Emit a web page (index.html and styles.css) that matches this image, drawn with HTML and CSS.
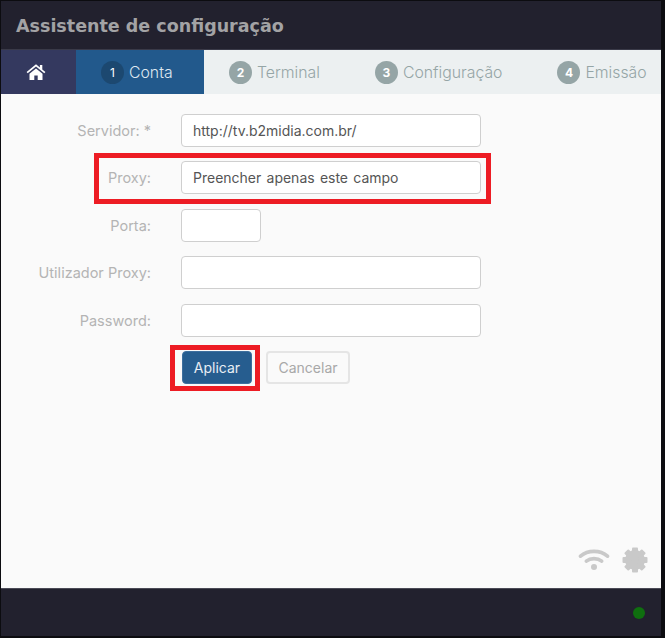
FILE: index.html
```html
<!DOCTYPE html>
<html lang="pt">
<head>
<meta charset="utf-8">
<title>Assistente de configuração</title>
<link rel="stylesheet" href="styles.css">
</head>
<body>
<div class="window">
  <header class="title-bar"><h1>Assistente de configuração</h1></header>
  <nav class="tabs">
    <div class="tab-home">
      <svg width="20" height="18" viewBox="0 0 20 18"><path fill="#fff" d="M10 1.2 0.6 9l1.1 1.3L10 3.5l8.3 6.8L19.400 9 16.300 6.500V2h-2.400v2.500zM3.500 10.800V17h4.800v-4.600h3.400V17h4.800v-6.200L10 5.400z"/></svg>
    </div>
    <div class="tab active"><span class="num">1</span><span>Conta</span></div>
    <div class="tab"><span class="num">2</span><span>Terminal</span></div>
    <div class="tab"><span class="num">3</span><span>Configuração</span></div>
    <div class="tab"><span class="num">4</span><span>Emissão</span></div>
  </nav>
  <main class="content">
    <form class="form">
      <div class="row"><label>Servidor: *</label><div class="input wide val">http://tv.b2midia.com.br/</div></div>
      <div class="row"><label>Proxy:</label><div class="input wide val spaced">Preencher apenas este campo</div></div>
      <div class="row"><label>Porta:</label><div class="input short"></div></div>
      <div class="row"><label>Utilizador Proxy:</label><div class="input wide"></div></div>
      <div class="row"><label>Password:</label><div class="input wide"></div></div>
      <div class="actions">
        <button type="button" class="btn primary">Aplicar</button>
        <button type="button" class="btn">Cancelar</button>
      </div>
      <div class="mark mark-proxy"></div>
      <div class="mark mark-apply"></div>
    </form>
    <div class="status-icons">
      <svg class="wifi" width="32" height="24" viewBox="0 0 32 24" fill="none" stroke="#c9c9c9" stroke-width="3.600" stroke-linecap="round">
        <path d="M2.500 9.200C9.800 2.800 22.200 2.800 29.500 9.200"/>
        <path d="M8.300 14.200C12.500 10.800 19.500 10.800 23.700 14.200"/>
        <circle cx="16" cy="20" r="3" fill="#c9c9c9" stroke="none"/>
      </svg>
      <svg width="26" height="26" viewBox="0 0 26 26">
        <g fill="#c9c9c9">
          <rect x="10" y="0.500" width="6" height="25" rx="1"/>
          <rect x="10" y="0.500" width="6" height="25" rx="1" transform="rotate(45 13 13)"/>
          <rect x="10" y="0.500" width="6" height="25" rx="1" transform="rotate(90 13 13)"/>
          <rect x="10" y="0.500" width="6" height="25" rx="1" transform="rotate(135 13 13)"/>
        </g>
        <circle cx="13" cy="13" r="7" fill="none" stroke="#c9c9c9" stroke-width="6"/>
      </svg>
    </div>
  </main>
  <footer class="foot"><span class="led"></span></footer>
</div>
</body>
</html>
```
FILE: styles.css
```css
* { box-sizing: border-box; }
html, body { height: 100%; }
body {
  margin: 0;
  background: #0c0c10;
  font-family: Inter, sans-serif;
  overflow: hidden;
}
.window {
  width: 660px;
  height: 635px;
  margin: 1px 0 0 1px;
  display: flex;
  flex-direction: column;
  background: #22212e;
}
.title-bar {
  height: 48px;
  flex: none;
  display: flex;
  align-items: center;
  padding: 2px 0 0 15px;
  background: #22212e;
}
.title-bar h1 {
  margin: 0;
  font-family: "DejaVu Sans", sans-serif;
  font-size: 17.500px;
  font-weight: 700;
  color: #a3a3a5;
}
.tabs {
  height: 45px;
  flex: none;
  display: flex;
  overflow: hidden;
  background: #ecf0f1;
  border-top: 1px solid #3a3a48;
}
.tab-home {
  width: 75px;
  flex: none;
  display: flex;
  align-items: center;
  justify-content: center;
  padding-right: 5px;
  background: #34395f;
}
.tab {
  flex: none;
  display: flex;
  align-items: center;
  gap: 5px;
  padding: 0 30px 0 25px;
  font-weight: 300;
  font-size: 15.800px;
  color: #95a5a6;
}
.tab.active { width: 128px; background: #22598c; color: #dfe8f0; }
.num {
  width: 23px;
  height: 23px;
  border-radius: 50%;
  display: flex;
  align-items: center;
  justify-content: center;
  background: #95a5a6;
  color: #fff;
  font-size: 12px;
  font-weight: 700;
}
.tab.active .num { background: #1c4870; font-weight: 400; }
.content {
  flex: 1;
  position: relative;
  background: #fafafa;
  padding-top: 20px;
}
.form {
  position: relative;
  width: 490px;
}
.row {
  display: flex;
  align-items: center;
  height: 33px;
  margin-bottom: 14.400px;
}
.row label {
  width: 150px;
  margin-right: 30px;
  text-align: right;
  font-size: 14.500px;
  color: #b4b4b4;
  white-space: nowrap;
}
.input {
  height: 33px;
  border: 1px solid #cfcfcf;
  border-radius: 4px;
  background: #fff;
  display: flex;
  align-items: center;
  padding: 0 11px;
  font-size: 14px;
  color: #555;
}
.spaced { word-spacing: 1.300px; }
.wide { width: 300px; }
.short { width: 80px; }
.actions {
  display: flex;
  gap: 14px;
  padding-left: 181px;
}
.btn {
  width: 84px;
  height: 33px;
  padding: 0;
  border: 2px solid #e5e5e5;
  border-radius: 4px;
  background: #fafafa;
  color: #a8a8a8;
  font: 14px Inter, sans-serif;
}
.btn.primary {
  width: 70px;
  background: #265d8f;
  border: 1px solid #3d6f9e;
  color: #e8eef4;
}
.mark {
  position: absolute;
  border: 5px solid #ed1c24;
}
.mark-proxy { left: 93px; top: 39px; width: 397px; height: 51px; }
.mark-apply { left: 169px; top: 231px; width: 90px; height: 46px; }
.status-icons {
  position: absolute;
  right: 13px;
  bottom: 15px;
  display: flex;
  align-items: center;
  gap: 12px;
}
.wifi { margin-bottom: 2px; }
.foot {
  height: 48px;
  flex: none;
  display: flex;
  align-items: center;
  justify-content: flex-end;
  padding-right: 16px;
  border-top: 1px solid #4a4a56;
  background: #22212e;
}
.led {
  width: 12px;
  height: 12px;
  border-radius: 50%;
  background: #0f6f0f;
}
```
